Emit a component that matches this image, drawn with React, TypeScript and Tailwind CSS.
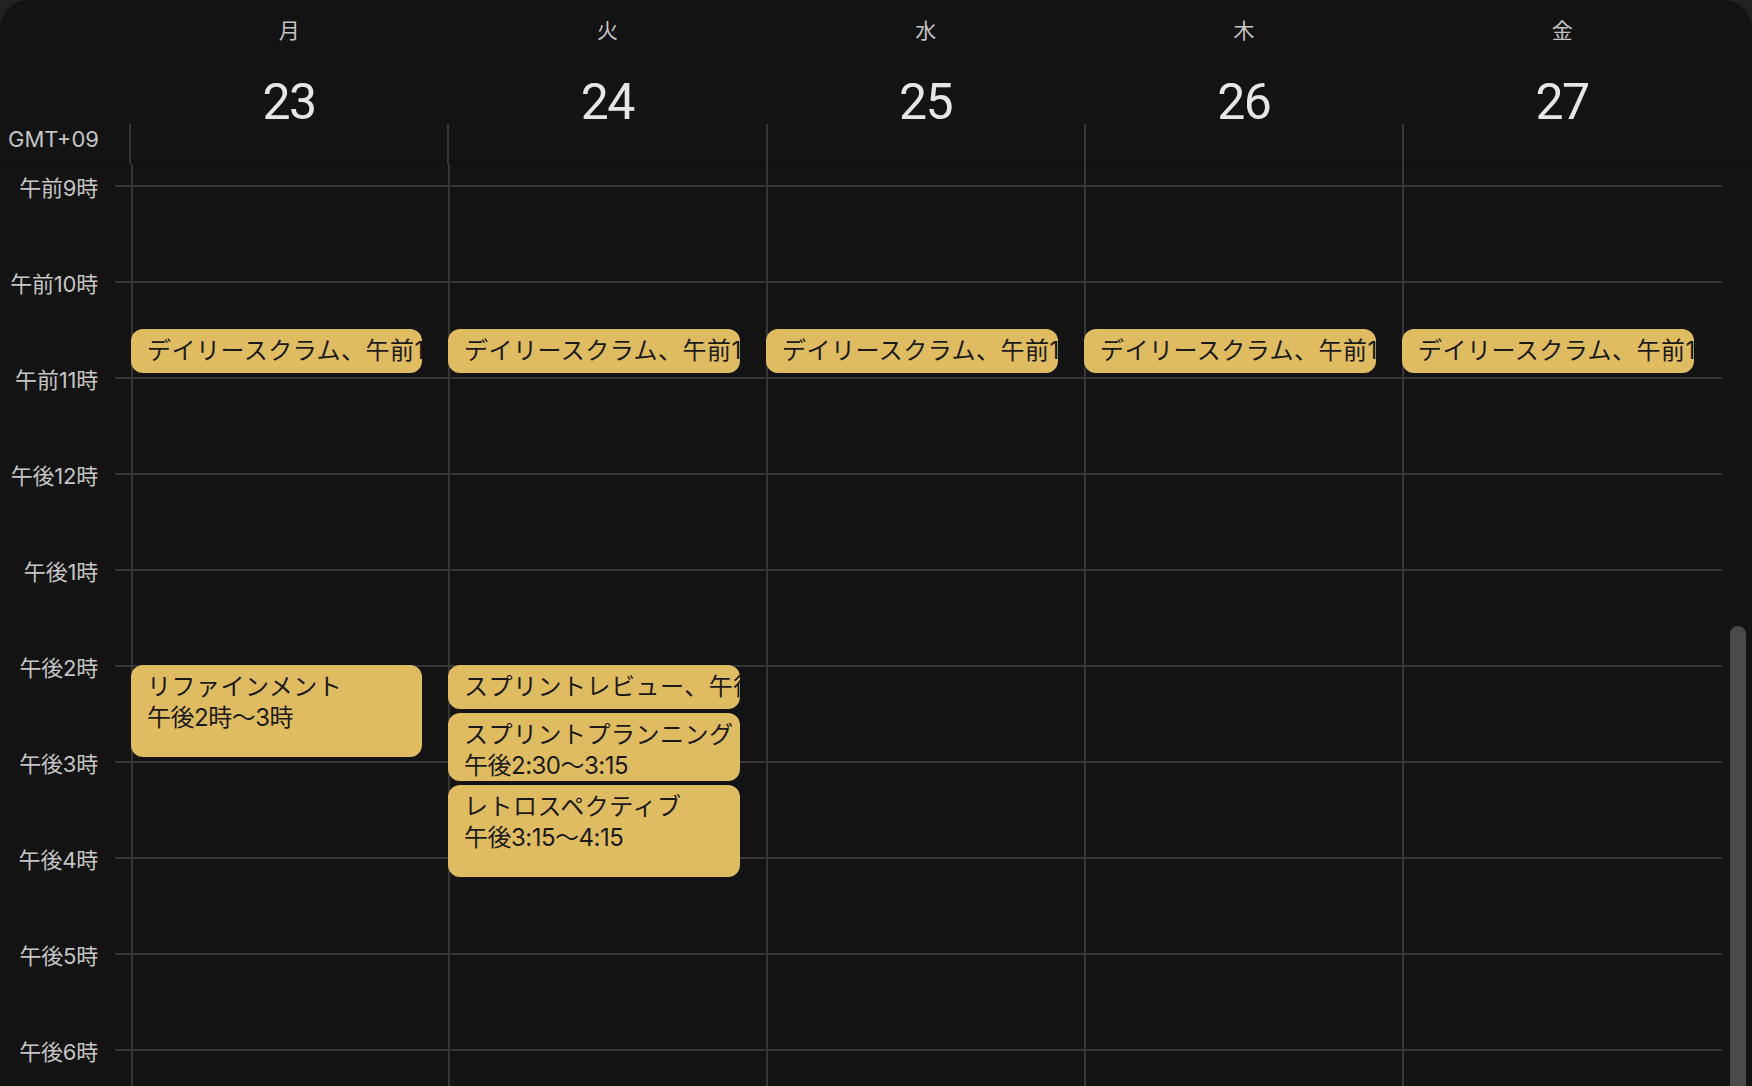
const days = [
  { w: "月", d: 23 },
  { w: "火", d: 24 },
  { w: "水", d: 25 },
  { w: "木", d: 26 },
  { w: "金", d: 27 },
];

const hours = ["午前9時", "午前10時", "午前11時", "午後12時", "午後1時", "午後2時", "午後3時", "午後4時", "午後5時", "午後6時"];

const daily = "デイリースクラム、午前10:30〜10:45";

function Event({ title, time, className }: { title: string; time?: string; className: string }) {
  return (
    <div className={"-ml-[2px] shrink-0 overflow-hidden rounded-[12px] bg-[#dfbc61] pl-4 pt-[6px] text-[24px] leading-[31px] whitespace-nowrap text-[#1a1a1a] " + className}>
      <div className="tracking-[0.5px]">{title}</div>
      {time && <div className="tracking-[-0.5px]">{time}</div>}
    </div>
  );
}

function Column({ children, className }: { children?: React.ReactNode; className: string }) {
  return <div className={"flex h-full flex-col border-l-2 border-[#363636] " + className}>{children}</div>;
}

export default function App() {
  return (
    <div className="h-[1086px] w-[1752px] overflow-hidden bg-[#222222] font-['Inter','Noto_Sans_CJK_JP',sans-serif]">
      <div className="relative h-full overflow-hidden rounded-t-[28px] bg-[#131313]">
        {/* header */}
        <div className="flex h-[164px] border-b border-[#0f0f0f]">
          <div className="flex w-[129px] shrink-0 flex-col justify-end pb-[10px] pl-[8px] text-[22px] leading-[28px] text-[#c4c4c4]">
            GMT+09
          </div>
          {days.map((day) => (
            <div key={day.d} className="relative flex w-[318.25px] flex-col items-center pt-[17px] pl-[2px]">
              <div className="text-[21px] leading-[28px] text-[#c4c4c4]">{day.w}</div>
              <div className="mt-[23px] font-['Roboto'] text-[50px] leading-[68px] tracking-[-1.5px] text-[#e6e6e6]">{day.d}</div>
              <div className="absolute -bottom-px left-0 h-[40px] w-[2px] bg-[#363636]" />
            </div>
          ))}
        </div>

        {/* body */}
        <div className="flex h-[922px]">
          <div className="w-[98px] shrink-0 pt-[10px] text-right text-[22px] leading-[28px] tracking-[-0.2px] text-[#c4c4c4]">
            {hours.map((h) => (
              <div key={h} className="h-[96px]">{h}</div>
            ))}
          </div>
          <div className="relative flex flex-1 pl-[33px]">
            {/* hour lines */}
            <div className="absolute left-[17px] top-[21px] w-[1607px]">
              {hours.map((h) => (
                <div key={h} className="h-[96px] border-t-2 border-[#363636]" />
              ))}
            </div>
            <div className="relative flex">
              <Column className="w-[317px]">
                <Event title={daily} className="mt-[165px] h-[44px] w-[291px]" />
                <Event title="リファインメント" time="午後2時〜3時" className="mt-[292px] h-[92px] w-[291px]" />
              </Column>
              <Column className="w-[318px]">
                <Event title={daily} className="mt-[165px] h-[44px] w-[292px]" />
                <Event title="スプリントレビュー、午後2時〜2:30" className="mt-[292px] h-[44px] w-[292px]" />
                <Event title="スプリントプランニング" time="午後2:30〜3:15" className="mt-[4px] h-[68px] w-[292px]" />
                <Event title="レトロスペクティブ" time="午後3:15〜4:15" className="mt-[4px] h-[92px] w-[292px]" />
              </Column>
              <Column className="w-[318px]">
                <Event title={daily} className="mt-[165px] h-[44px] w-[292px]" />
              </Column>
              <Column className="w-[318px]">
                <Event title={daily} className="mt-[165px] h-[44px] w-[292px]" />
              </Column>
              <Column className="w-[318px]">
                <Event title={daily} className="mt-[165px] h-[44px] w-[292px]" />
              </Column>
            </div>
          </div>
        </div>

        {/* scrollbar */}
        <div className="absolute right-[6px] top-[626px] bottom-0 w-4 rounded-t-full bg-[#4a4a4a]" />
      </div>
    </div>
  );
}
